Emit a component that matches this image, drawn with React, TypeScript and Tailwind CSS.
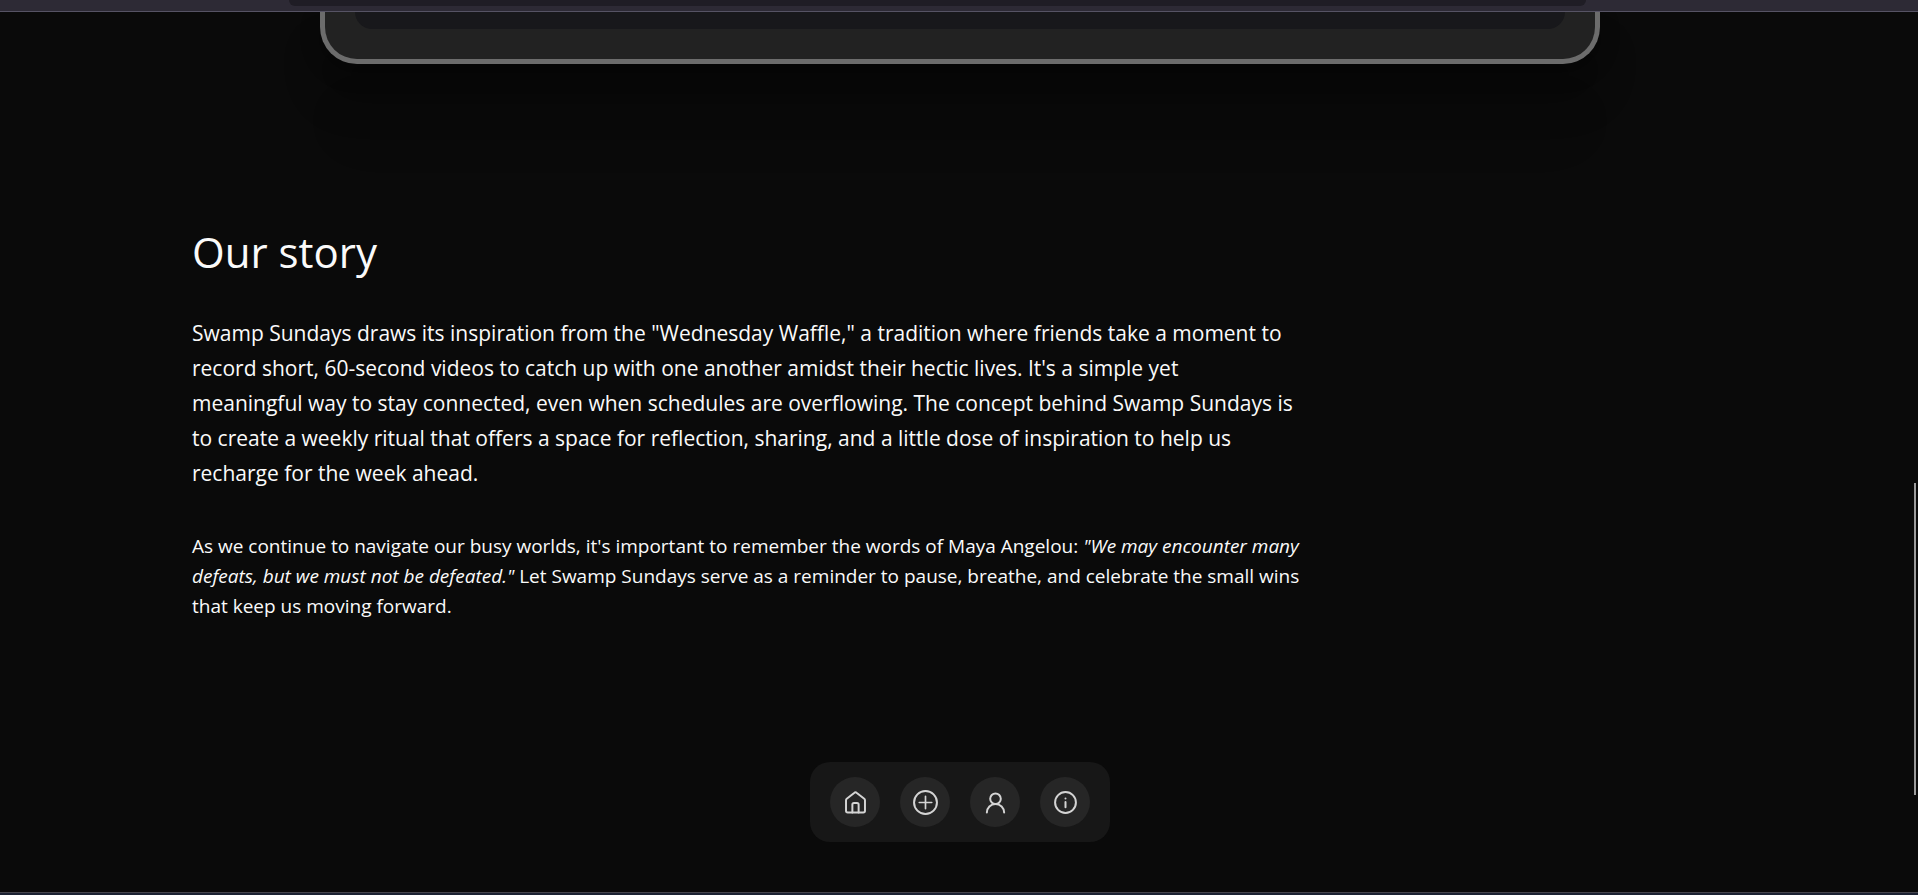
import type { ReactNode } from 'react'

function Icon({ children }: { children: ReactNode }) {
  return (
    <svg
      viewBox="0 0 24 24"
      className="size-[25px]"
      fill="none"
      stroke="currentColor"
      strokeWidth="1.9"
      strokeLinecap="round"
      strokeLinejoin="round"
      overflow="visible"
      aria-hidden="true"
    >
      {children}
    </svg>
  )
}

const navItems = [
  {
    label: 'Home',
    icon: (
      <Icon>
        <path d="M2.900 9.900a2 2 0 0 1 .7-1.500l7.100-5.600a2 2 0 0 1 2.600 0l7.100 5.600a2 2 0 0 1 .7 1.500V20a1.600 1.600 0 0 1-1.600 1.600h-15A1.600 1.600 0 0 1 2.900 20z" />
        <path d="M9 21.500V14a1.500 1.500 0 0 1 1.500-1.500h3A1.500 1.500 0 0 1 15 14v7.500" />
      </Icon>
    ),
  },
  {
    label: 'Add',
    icon: (
      <Icon>
        <circle cx="12" cy="12" r="11" />
        <path d="M12 6v12M6 12h12" strokeWidth="1.6" />
      </Icon>
    ),
  },
  {
    label: 'Profile',
    icon: (
      <Icon>
        <circle cx="12" cy="8.4" r="5.1" />
        <path d="M20.300 21.700a8.300 8.300 0 0 0-16.600 0" />
      </Icon>
    ),
  },
  {
    label: 'About',
    icon: (
      <Icon>
        <circle cx="12" cy="12" r="10" />
        <path d="M12 11.500v5M12 8.200h.01" />
      </Icon>
    ),
  },
]

export default function App() {
  return (
    <div className="flex min-h-screen flex-col bg-[#0a0a0a] font-['Open_Sans','Noto_Sans',sans-serif] text-neutral-50">
      <header className="h-3 border-b border-[#565364] bg-[#2d2a35] pr-[332px] pl-[289px]">
        <div className="h-[6px] rounded-b-[6px] bg-[#1f1d25]" />
      </header>

      <main className="flex-1 overflow-hidden">
        <section className="pr-[318px] pl-[320px]">
          <div className="h-[52px] rounded-b-[37px] border-[5px] border-t-0 border-[#6c6c6c] bg-[#222222] px-[30px] shadow-[0_9px_20px_#0000004a,0_37px_37px_#00000042,0_84px_50px_-20px_#00000026]">
            <div className="h-[17px] rounded-b-[20px] bg-zinc-900" />
          </div>
        </section>

        <section className="px-48 pt-[163px]">
          <h1 className="text-[42px] leading-[50px]">Our story</h1>
          <div className="max-w-[1130px]">
            <p className="mt-[39px] text-[21px] leading-[35px]">
              Swamp Sundays draws its inspiration from the "Wednesday Waffle," a tradition where friends take a moment to record short, 60-second videos to catch up with one another amidst their hectic lives. It's a simple yet
              <br />
              meaningful way to stay connected, even when schedules are overflowing. The concept behind Swamp Sundays is
              <br />
              to create a weekly ritual that offers a space for reflection, sharing, and a little dose of inspiration to help us
              <br />
              recharge for the week ahead.
            </p>
            <p className="mt-10 text-[19px] leading-[30px]">
              As we continue to navigate our busy worlds, it's important to remember the words of Maya Angelou: <em>"We may encounter many defeats, but we must not be defeated."</em> Let Swamp Sundays serve as a reminder to pause, breathe, and celebrate the small wins that keep us moving forward.
            </p>
          </div>
        </section>
      </main>

      <nav aria-label="Main" className="fixed inset-x-0 bottom-[53px] flex justify-center pl-[2px]">
        <ul className="flex gap-5 rounded-[20px] bg-neutral-900 px-5 py-[15px]">
          {navItems.map((item) => (
            <li key={item.label}>
              <a href="#" aria-label={item.label} className="flex size-[50px] items-center justify-center rounded-full bg-neutral-800 text-neutral-300">
                {item.icon}
              </a>
            </li>
          ))}
        </ul>
      </nav>

      {/* scroll thumb */}
      <div className="fixed top-[483px] right-[2px] h-[312px] w-[2px] bg-[#9b9b9b]" />

      <footer className="h-[3px] border-t border-[#45444c] bg-[#1c2233]" />
    </div>
  )
}
